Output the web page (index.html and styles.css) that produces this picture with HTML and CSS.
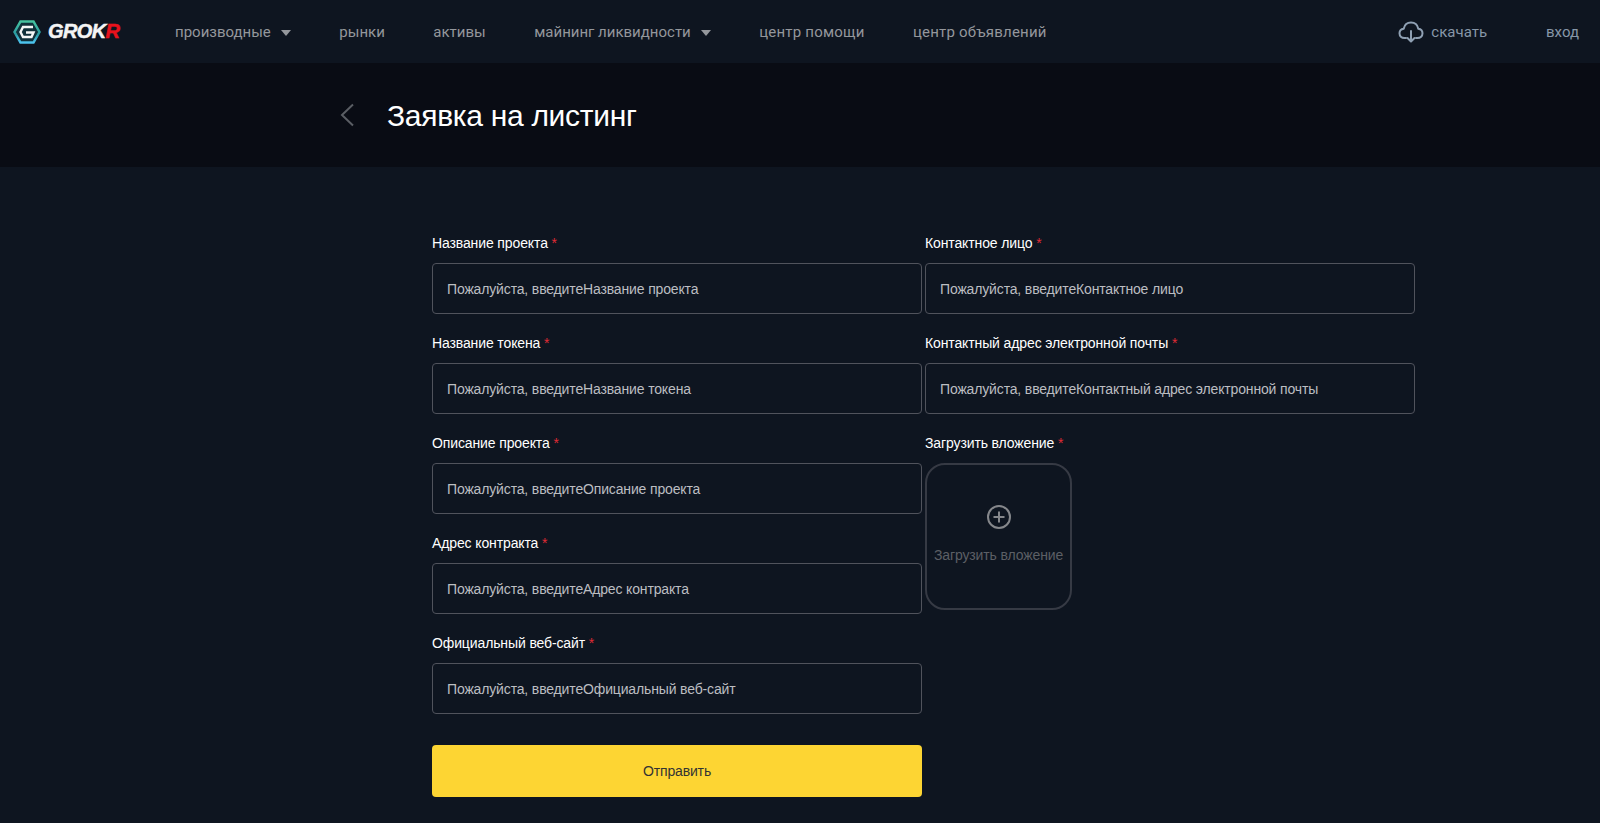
FILE: index.html
```html
<!DOCTYPE html>
<html lang="ru">
<head>
    <meta charset="UTF-8">
    <meta name="viewport" content="width=device-width, initial-scale=1.0">
    <title>Заявка на листинг</title>
    <link rel="stylesheet" href="styles.css">
</head>
<body>
    <div class="navbar">
        <div class="logo">
            <svg class="logo-mark" width="28" height="24" viewBox="0 0 28 24">
                <defs>
                    <linearGradient id="hex" x1="0" y1="0" x2="0" y2="1">
                        <stop offset="0" stop-color="#45c29f"/>
                        <stop offset="0.6" stop-color="#2a9aa0"/>
                        <stop offset="1" stop-color="#4cc3ee"/>
                    </linearGradient>
                </defs>
                <path d="M7.500 1.500H20.500L26.500 12L20.500 22.500H7.500L1.500 12Z" fill="#10303a" stroke="url(#hex)" stroke-width="2.500"/>
                <path d="M20 7H10L7.500 12L10 17H18.500L20.500 12.500H13" fill="none" stroke="#f4f6f6" stroke-width="2.400"/>
            </svg>
            <span class="logo-text">GROK<span class="logo-red">R</span></span>
        </div>
        <div class="nav-links">
            <a href="#">производные<span class="caret"></span></a>
            <a href="#">рынки</a>
            <a href="#">активы</a>
            <a href="#">майнинг ликвидности<span class="caret"></span></a>
            <a href="#">центр помощи</a>
            <a href="#">центр объявлений</a>
        </div>
        <div class="nav-right">
            <a href="#" class="download">
                <svg width="26" height="24" viewBox="0 0 26 24" fill="none" stroke="#8fa0b3" stroke-width="2" stroke-linecap="round" stroke-linejoin="round">
                    <path d="M8 18H6.500C3.500 18 1.500 16 1.500 13.300C1.500 10.800 3.300 9 5.700 8.700C6.500 5 9.400 2.500 13 2.500C16.600 2.500 19.500 5 20.300 8.700C22.700 9 24.500 10.800 24.500 13.300C24.500 16 22.500 18 19.500 18H18"/>
                    <path d="M13 11V21M9.500 18L13 21.500L16.500 18"/>
                </svg>
                скачать
            </a>
            <a href="#" class="login">вход</a>
        </div>
    </div>

    <div class="title-bar">
        <div class="title-inner">
            <svg class="back" width="16" height="24" viewBox="0 0 16 24" fill="none" stroke="#5a5e64" stroke-width="2">
                <path d="M14 1.500L3 12L14 22.500"/>
            </svg>
            <h1>Заявка на листинг</h1>
        </div>
    </div>

    <form class="listing-form">
        <div class="form-col">
            <div class="field">
                <label>Название проекта <i>*</i></label>
                <input type="text" placeholder="Пожалуйста, введитеНазвание проекта">
            </div>
            <div class="field">
                <label>Название токена <i>*</i></label>
                <input type="text" placeholder="Пожалуйста, введитеНазвание токена">
            </div>
            <div class="field">
                <label>Описание проекта <i>*</i></label>
                <input type="text" placeholder="Пожалуйста, введитеОписание проекта">
            </div>
            <div class="field">
                <label>Адрес контракта <i>*</i></label>
                <input type="text" placeholder="Пожалуйста, введитеАдрес контракта">
            </div>
            <div class="field">
                <label>Официальный веб-сайт <i>*</i></label>
                <input type="text" placeholder="Пожалуйста, введитеОфициальный веб-сайт">
            </div>
            <button type="button" class="submit">Отправить</button>
        </div>
        <div class="form-col">
            <div class="field">
                <label>Контактное лицо <i>*</i></label>
                <input type="text" placeholder="Пожалуйста, введитеКонтактное лицо">
            </div>
            <div class="field">
                <label>Контактный адрес электронной почты <i>*</i></label>
                <input type="text" placeholder="Пожалуйста, введитеКонтактный адрес электронной почты">
            </div>
            <div class="field">
                <label>Загрузить вложение <i>*</i></label>
                <div class="upload">
                    <svg width="26" height="26" viewBox="0 0 26 26" fill="none" stroke="#85878b" stroke-width="2">
                        <circle cx="13" cy="13" r="11"/>
                        <path d="M13 7.500V18.500M7.500 13H18.500"/>
                    </svg>
                    <span>Загрузить вложение</span>
                </div>
            </div>
        </div>
    </form>
</body>
</html>
```

FILE: styles.css
```css
body {
    font-family: 'Liberation Sans', Arial, sans-serif;
    background-color: #0e1520;
    color: #fff;
    margin: 0;
    padding: 0;
}

.navbar {
    display: flex;
    align-items: center;
    height: 63px;
    padding: 0 21px 0 13px;
}
.logo {
    display: flex;
    align-items: center;
    width: 162px;
}
.logo-mark {
    margin-right: 7px;
    flex: none;
}
.logo-text {
    font-size: 20px;
    font-weight: bold;
    font-style: italic;
    letter-spacing: -0.6px;
    color: #f4f4f4;
    -webkit-text-stroke: 0.5px currentColor;
}
.logo-red {
    color: #e8121c;
}
.nav-links {
    display: flex;
    gap: 48.500px;
    flex: 1;
}
.navbar a {
    color: #94979c;
    font-family: Roboto, sans-serif;
    font-size: 15px;
    text-decoration: none;
    display: flex;
    align-items: center;
}
.caret {
    width: 0;
    height: 0;
    margin-left: 10px;
    margin-top: 2px;
    border-left: 5px solid transparent;
    border-right: 5px solid transparent;
    border-top: 6px solid #94979c;
}
.nav-links a:nth-child(n+5) {
    letter-spacing: 0.2px;
}
.nav-right {
    display: flex;
    align-items: center;
    gap: 59px;
}
.navbar .download {
    gap: 7px;
}
.navbar .download,
.navbar .login {
    color: #8797a8;
}

.title-bar {
    background-color: #090c14;
    height: 104px;
    display: flex;
    align-items: center;
}
.title-inner {
    display: flex;
    align-items: center;
    margin-left: 339px;
}
.back {
    margin-right: 32px;
}
h1 {
    margin: 1px 0 0;
    font-size: 30px;
    font-weight: normal;
    line-height: 36px;
    letter-spacing: -0.3px;
}

.listing-form {
    display: flex;
    gap: 3px;
    padding: 64px 0 26px 432px;
}
.form-col {
    width: 490px;
    display: flex;
    flex-direction: column;
}
.field {
    height: 100px;
}
label {
    display: block;
    font-size: 14px;
    line-height: 24px;
    margin-bottom: 8px;
    letter-spacing: -0.12px;
}
label i {
    color: #e02b35;
    font-style: normal;
}
input[type="text"] {
    display: block;
    box-sizing: border-box;
    width: 100%;
    height: 51px;
    padding: 0 14px;
    background: transparent;
    border: 1px solid #50535c;
    border-radius: 4px;
    color: #fff;
    font-family: inherit;
    font-size: 14px;
    letter-spacing: -0.15px;
}
input::placeholder {
    color: #bcbec2;
    opacity: 1;
}
.upload {
    box-sizing: border-box;
    width: 147px;
    height: 147px;
    border: 2px solid #363a44;
    border-radius: 20px;
    display: flex;
    flex-direction: column;
    align-items: center;
    padding-top: 39px;
    gap: 17px;
    color: #5c5f65;
    font-size: 14px;
    letter-spacing: -0.12px;
    white-space: nowrap;
}
.submit {
    margin-top: 14px;
    height: 52px;
    border: none;
    border-radius: 4px;
    background-color: #fdd533;
    color: #333;
    font-family: inherit;
    font-size: 14px;
    letter-spacing: -0.15px;
    cursor: pointer;
}
```
